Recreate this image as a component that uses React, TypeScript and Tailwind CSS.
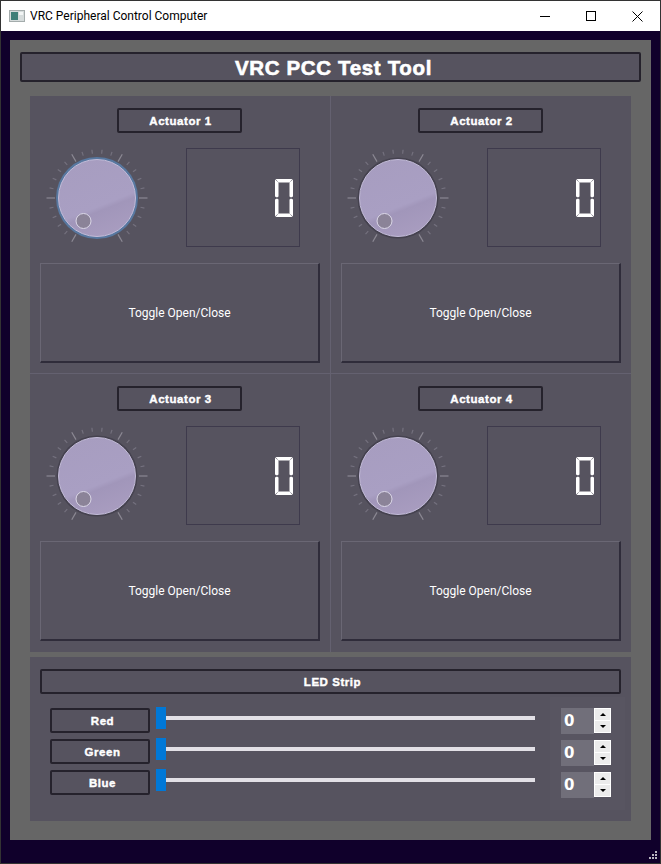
import React from "react";

const ticks = Array.from({ length: 26 }, (_, i) => -150 + i * 12);

function Dial({ focused }: { focused?: boolean }) {
  const id = focused ? "kf" : "kn";
  return (
    <svg width="110" height="110" viewBox="-55 -55 110 110" className="shrink-0">
      <defs>
        <linearGradient id={id} x1="0.3" y1="0" x2="0.7" y2="1">
          <stop offset="0" stopColor="#a79dc0" />
          <stop offset="0.6" stopColor="#a99fc3" />
          <stop offset="0.66" stopColor="#a196ba" />
          <stop offset="1" stopColor="#a99dc0" />
        </linearGradient>
      </defs>
      {ticks.map((a) => {
        const major = (a + 150) % 60 === 0;
        const r = (a * Math.PI) / 180;
        const r1 = major ? 42 : 44.5;
        const r2 = major ? 50.5 : 48.5;
        return (
          <line
            key={a}
            x1={r1 * Math.sin(r)}
            y1={-r1 * Math.cos(r)}
            x2={r2 * Math.sin(r)}
            y2={-r2 * Math.cos(r)}
            stroke={major ? "#8b8893" : "#74717e"}
            strokeWidth="1.2"
          />
        );
      })}
      <circle cx="0" cy="0" r="40.5" fill="#45424f" />
      {focused && <circle cx="0" cy="0" r="41" fill="#5878a0" />}
      <circle cx="0" cy="0" r="38.5" fill={`url(#${id})`} stroke="#c3bcd8" strokeWidth="1" />
      <circle cx="-13.5" cy="23" r="7.5" fill="#8b8398" stroke="#dcd8e8" strokeWidth="1" />
    </svg>
  );
}

function Digit() {
  return (
    <svg width="18" height="38" viewBox="0 0 18 38" className="block">
      <path d="M0.5 0H17.5L14.5 3.5H3.5Z" fill="#fff" />
      <path d="M0.5 38H17.5L14.5 34.5H3.5Z" fill="#fff" />
      <path d="M0 0.5L3.5 3.5V17.5L2 18.5L0 17.5Z" fill="#fff" />
      <path d="M18 0.5L14.5 3.5V17.5L16 18.5L18 17.5Z" fill="#fff" />
      <path d="M0 37.5L3.5 34.5V20.5L2 19.5L0 20.5Z" fill="#fff" />
      <path d="M18 37.5L14.5 34.5V20.5L16 19.5L18 20.5Z" fill="#fff" />
    </svg>
  );
}

function Actuator({ n, focused, top }: { n: number; focused?: boolean; top?: boolean }) {
  return (
    <div className={`flex flex-col pl-[10px] pt-[12px] ${top ? "h-[277px]" : "h-[278px]"}`}>
      <div className="w-[278px] flex justify-center">
        <div className="w-[125px] h-[25px] flex items-center justify-center pl-[3px] pt-[2px] rounded-[2px] border-2 border-[#25222c] text-white text-[11.5px] font-bold tracking-[0.55px] [-webkit-text-stroke:0.4px_white] font-['Liberation_Sans',sans-serif]">
          Actuator {n}
        </div>
      </div>
      <div className="flex items-start mt-[10px] h-[105px]">
        <div className="w-[146px] pl-[2px]">
          <Dial focused={focused} />
        </div>
        <div className="w-[114px] h-[99px] mt-[5px] border border-[#3e3a4c] flex items-center justify-end pr-[6px]">
          <Digit />
        </div>
      </div>
      <div className="w-[280px] h-[100px] mt-[15px] flex items-center justify-center border-t border-l border-[#6a6774] border-r-2 border-b-2 border-r-[#2f2c3a] border-b-[#2f2c3a] text-white text-[12px] font-['Roboto',sans-serif]">
        Toggle Open/Close
      </div>
    </div>
  );
}

function LedRow({ name, mt }: { name: string; mt: string }) {
  return (
    <div className={`flex items-center h-[25px] ${mt}`}>
      <div className="w-[100px] h-[25px] flex items-center justify-center pl-[5px] pt-[2px] rounded-[2px] border-2 border-[#25222c] text-white text-[11.5px] font-bold tracking-[0.55px] [-webkit-text-stroke:0.4px_white] font-['Liberation_Sans',sans-serif]">
        {name}
      </div>
      <div className="ml-[6px] w-[379px] flex items-center -mt-[5px]">
        <div className="w-[10px] h-[22px] bg-[#0078d7] shrink-0" />
        <div className="flex-1 h-[4px] bg-[#e2e0e6]" />
      </div>
    </div>
  );
}

function Spin() {
  return (
    <div className="flex h-[26px]">
      <div className="w-[33px] h-[26px] bg-[#716f7a] flex items-center pl-[3px] text-white text-[15px] font-bold font-['DejaVu_Sans',sans-serif]">
        0
      </div>
      <div className="w-[17px] h-[25px] bg-white p-[1px] flex flex-col gap-[1px]">
        <div className="flex-1 bg-[#ececec] flex items-center justify-center">
          <div className="w-0 h-0 border-l-[3px] border-r-[3px] border-b-[3px] border-l-transparent border-r-transparent border-b-black" />
        </div>
        <div className="flex-1 bg-[#ececec] flex items-center justify-center">
          <div className="w-0 h-0 border-l-[3px] border-r-[3px] border-t-[3px] border-l-transparent border-r-transparent border-t-black" />
        </div>
      </div>
    </div>
  );
}

export default function App() {
  return (
    <div className="relative w-[661px] h-[864px] flex flex-col bg-[#10002b] border border-[#333] overflow-hidden">
      <div className="h-[30px] bg-white flex items-center shrink-0 text-black">
        <svg width="16" height="16" viewBox="0 0 16 16" className="ml-[8px]">
          <rect x="0.5" y="2.5" width="15" height="11" fill="#d6dcdc" stroke="#a4acac" />
          <rect x="2" y="4" width="7" height="8" fill="#3f7f78" />
          <rect x="10" y="4" width="4" height="3" fill="#f2f5f5" />
        </svg>
        <span className="ml-[5px] text-[12px] font-['Roboto',sans-serif]">VRC Peripheral Control Computer</span>
        <div className="ml-auto flex h-full">
          <div className="w-[46px] flex items-center justify-center">
            <svg width="10" height="10" viewBox="0 0 10 10"><path d="M0 5.5H10" stroke="#000" strokeWidth="1" /></svg>
          </div>
          <div className="w-[46px] flex items-center justify-center">
            <svg width="10" height="10" viewBox="0 0 10 10"><rect x="0.5" y="0.5" width="9" height="9" fill="none" stroke="#000" /></svg>
          </div>
          <div className="w-[46px] flex items-center justify-center">
            <svg width="11" height="11" viewBox="0 0 11 11"><path d="M0.5 0.5L10.5 10.5M10.5 0.5L0.5 10.5" stroke="#000" strokeWidth="1" /></svg>
          </div>
        </div>
      </div>

      <div className="mt-[9px] mx-[9px] h-[800px] w-[641px] bg-[#666666] flex flex-col px-[10px] pt-[12px]">
        <div className="h-[30px] w-[621px] flex items-center justify-center pl-[6px] pt-[2px] rounded-[2px] border-2 border-[#25222c] bg-[#56535f] text-white text-[20.5px] font-bold tracking-[0.65px] [-webkit-text-stroke:0.6px_white] font-['Liberation_Sans',sans-serif]">
          VRC PCC Test Tool
        </div>

        <div className="mt-[14px] ml-[10px] w-[601px] h-[556px] bg-[#56535f] grid grid-cols-[301px_300px]">
          <div className="border-r border-b border-[#646170]"><Actuator n={1} focused top /></div>
          <div className="border-b border-[#646170]"><Actuator n={2} top /></div>
          <div className="border-r border-[#646170]"><Actuator n={3} /></div>
          <div><Actuator n={4} /></div>
        </div>

        <div className="mt-[5px] ml-[10px] w-[601px] h-[164px] bg-[#56535f] pt-[12px] pl-[10px] flex flex-col">
          <div className="w-[581px] h-[25px] flex items-center justify-center pl-[4px] pt-[2px] rounded-[2px] border-2 border-[#25222c] text-white text-[11.5px] font-bold tracking-[0.55px] [-webkit-text-stroke:0.4px_white] font-['Liberation_Sans',sans-serif]">
            LED Strip
          </div>
          <div className="flex mt-[3px]">
            <div className="pl-[10px] pt-[11px] w-[510px]">
              <LedRow name="Red" mt="" />
              <LedRow name="Green" mt="mt-[6px]" />
              <LedRow name="Blue" mt="mt-[6px]" />
            </div>
            <div className="w-[75px] h-[113px] bg-[#585561] pl-[11px] pt-[11px] flex flex-col gap-[6px]">
              <Spin />
              <Spin />
              <Spin />
            </div>
          </div>
        </div>
      </div>

      <svg width="12" height="12" viewBox="0 0 12 12" className="absolute right-[2px] bottom-[2px]">
        {[[9, 1], [6, 4], [9, 4], [3, 7], [6, 7], [9, 7]].map(([x, y]) => (
          <rect key={`${x}-${y}`} x={x} y={y + 1} width="2" height="2" fill="#b9b6c0" />
        ))}
      </svg>
    </div>
  );
}
